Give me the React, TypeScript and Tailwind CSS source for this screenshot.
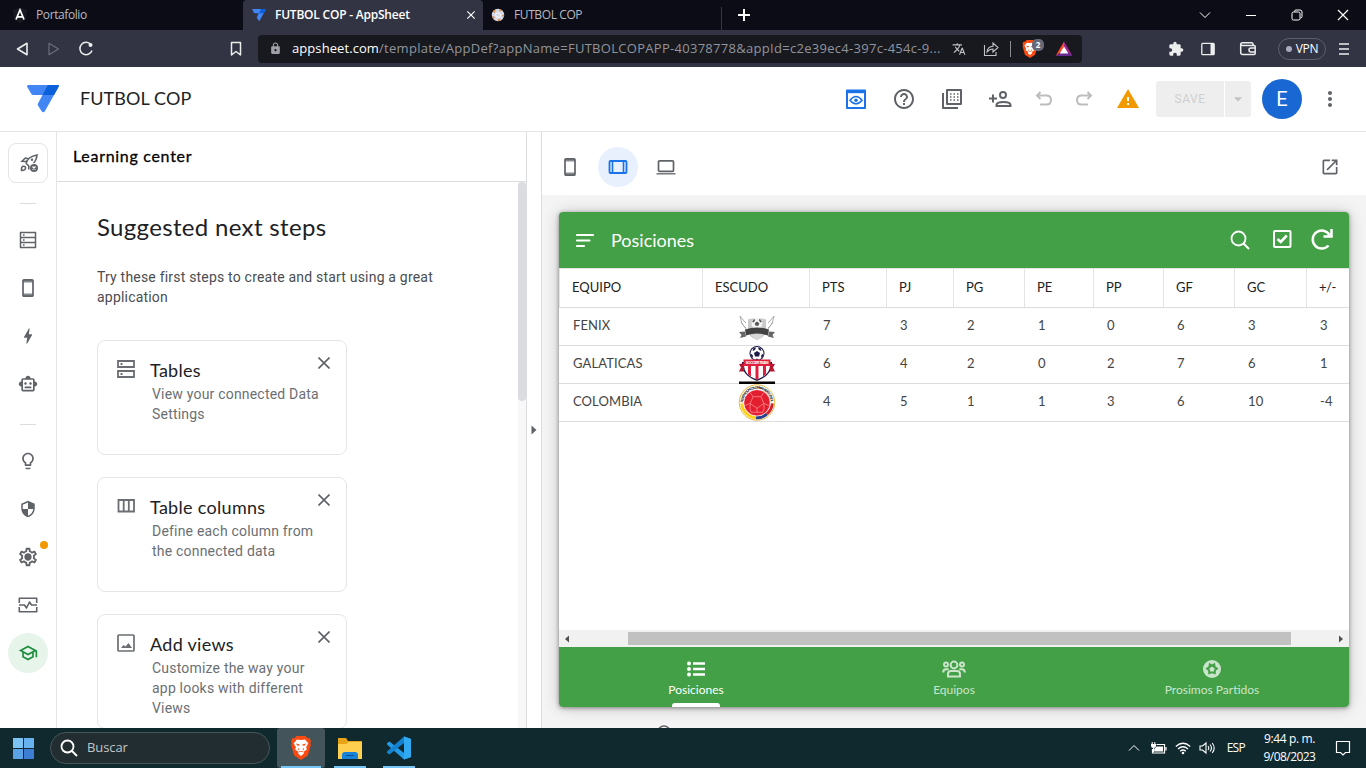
import React from "react";
import {
  MdHelpOutline, MdWarning, MdArrowDropDown, MdMoreVert, MdOutlineSmartToy, MdBolt,
  MdOutlineLightbulb, MdOutlineSettings, MdOutlineSchool, MdClose,
  MdOpenInNew, MdTranslate, MdExtension, MdLock, MdSecurity,
} from "react-icons/md";

type SvgProps = { className?: string; children: React.ReactNode; box?: string };
const Svg = ({ className = "", children, box = "0 0 24 24" }: SvgProps) => (
  <svg viewBox={box} className={"shrink-0 " + className} fill="none" stroke="currentColor">{children}</svg>
);

const AppSheetLogo = ({ className }: { className: string }) => (
  <Svg box="0 0 32 28" className={className}>
    <g stroke="none">
      <path d="M1.500 0H31Q32.500 0 31.500 2L18 26Q16.300 28.500 14.500 26L11 20.500Q10.400 19.500 11 18.500L15.500 10H6Q5 10 4.400 9L.3 2Q-.5 0 1.500 0Z" fill="#4285f4" />
      <path d="M21 0H31Q32.500 0 31.500 2L27 10H15.500Z" fill="#0a5fdb" />
    </g>
  </Svg>
);

const BraveLion = ({ className }: { className: string }) => (
  <Svg box="0 0 20 24" className={className}>
    <g stroke="none">
      <path d="M5.500 0h9l2 2.200 2-.2L20 5l-.7 2 .5 2-3 10.500L10 24l-6.800-4.500L.2 9l.5-2L0 5l1.500-3 2 .2Z" fill="#fb4a12" />
      <path d="M6 3.500l4 .6 4-.6 3.300 3.800-2.200 4 .8 2.200-3.300 2.200.3 1.800L10 20l-2.900-2.500.3-1.800-3.300-2.200.8-2.200-2.200-4Z" fill="#fff" />
      <path d="M5 7.500l3.700.9-.5 1.300-2-.1ZM15 7.500l-3.700.9.500 1.300 2-.1ZM7 11.500l1.500 2-1 1ZM13 11.500l-1.500 2 1 1ZM7.700 15.500L10 14.900l2.300.6-.4.800-1.900-.6-1.900.6Z" fill="#fb4a12" />
    </g>
  </Svg>
);

const Phone = ({ className }: { className: string }) => (
  <Svg box="0 0 14 20" className={className}>
    <rect x="2" y="1.800" width="10" height="16.400" rx="1" strokeWidth="1.700" />
    <path d="M2 3.300h10M2 16.700h10" strokeWidth="2.600" opacity=".75" />
  </Svg>
);

function Browser() {
  return (
    <div className="font-['Open_Sans','Noto_Sans',sans-serif]">
      <div className="flex h-[30px] bg-[#0b0c15] text-[12px]">
        <div className="flex w-[243px] items-center pl-3 text-[#b9bac0]">
          <Svg box="0 0 16 16" className="size-4">
            <path d="M8 .5L15 3l-1 9.500L8 16l-6-3.500L1 3Z" fill="#171a22" stroke="none" />
            <path d="M4 12.500L8 3l4 9.500M5.500 9.800h5" stroke="#fff" strokeWidth="1.700" />
          </Svg>
          <span className="ml-2 tracking-[-0.4px]">Portafolio</span>
        </div>
        <div className="flex w-[240px] items-center rounded-t-[4px] bg-[#323443] pl-[9px] pr-[5px] text-white">
          <AppSheetLogo className="h-[12px] w-[14px]" />
          <span className="ml-[9px] font-semibold tracking-[-0.22px]">FUTBOL COP - AppSheet</span>
          <MdClose className="ml-auto size-[14px]" />
        </div>
        <div className="flex w-[239px] items-center pl-2 text-[#b9bac0]">
          <Svg box="0 0 14 14" className="size-[14px]">
            <circle cx="7" cy="7" r="6.200" fill="#d5d9e6" stroke="none" />
            <path d="M7 4.500L9.500 6.300 8.500 9.200h-3L4.500 6.300Z" stroke="#fff" strokeWidth=".8" />
            <circle cx="7" cy="7" r="5.200" stroke="#d98c4a" strokeWidth="1.800" strokeDasharray="2.500 4.030" strokeDashoffset="1" />
          </Svg>
          <span className="ml-[9px] tracking-[-0.4px]">FUTBOL COP</span>
          <i className="ml-auto h-[23px] w-px self-end bg-[#343643]" />
        </div>
        <div className="flex flex-1 items-center pl-[15px] text-white">
          <Svg box="0 0 14 14" className="size-[14px]"><path d="M7 1v12M1 7h12" strokeWidth="2" /></Svg>
          <div className="ml-auto flex items-center pr-[17px]">
            <Svg box="0 0 12 12" className="mr-[34px] size-3"><path d="M1 3.500l5 5 5-5" /></Svg>
            <Svg box="0 0 12 12" className="mr-[34px] size-3"><path d="M1 6.500h10" /></Svg>
            <Svg box="0 0 12 12" className="mr-[34px] size-3"><path d="M3.500 2.500Q3.500 1 5 1h4q2 0 2 2v4.500Q11 9 9.500 9M2.500 3h5Q9 3 9 4.500v5Q9 11 7.500 11h-5Q1 11 1 9.500v-5Q1 3 2.500 3Z" /></Svg>
            <Svg box="0 0 12 12" className="size-3"><path d="M1 1l10 10M11 1L1 11" strokeWidth="1.200" /></Svg>
          </div>
        </div>
      </div>
      <div className="flex h-[37px] items-center bg-[#323443] pl-4 text-[#eceded]">
        <Svg box="0 0 14 14" className="size-[14px]"><path d="M11 1.300v11.400L1.500 7Z" strokeWidth="1.600" strokeLinejoin="round" /></Svg>
        <Svg box="0 0 14 14" className="ml-[17px] size-[14px] text-[#6c6e7c]"><path d="M2 1.300v11.400L11.500 7Z" strokeWidth="1.200" strokeLinejoin="round" /></Svg>
        <Svg box="0 0 16 16" className="ml-[17px] size-4"><path d="M13 3.700A6.200 6.200 0 1 0 14 9.500" strokeWidth="1.500" /><circle cx="12.500" cy="4" r="2" fill="currentColor" stroke="none" /></Svg>
        <Svg box="0 0 12 16" className="ml-[136px] h-4 w-3"><path d="M1.500 1.500h9v12.500L6 10.500 1.500 14Z" strokeWidth="1.500" strokeLinejoin="round" /></Svg>
        <div className="ml-4 flex h-7 w-[824px] items-center rounded-[4px] bg-[#17191f] pl-[11px] pr-2 text-[13px] text-[#92949d]">
          <MdLock className="size-[13px] text-[#a0a1a8]" />
          <span className="ml-[10px] w-[651px] whitespace-nowrap tracking-[0.29px]"><span className="tracking-[0.08px] text-white">appsheet.com</span>/template/AppDef?appName=FUTBOLCOPAPP-40378778&amp;appId=c2e39ec4-397c-454c-9...</span>
          <MdTranslate className="ml-[9px] size-[14px] text-[#c2c3c8]" />
          <Svg box="0 0 16 16" className="ml-[17px] size-4 text-[#c2c3c8]"><path d="M1.500 4v10.500h11.500V11M4 11Q4.500 5.500 10 5.200V2L15 6.500 10 11V8Q6.500 8 4 11Z" strokeWidth="1.100" /></Svg>
          <i className="ml-[11px] h-4 w-px bg-[#8a8b93]" />
          <div className="relative ml-[11px] flex w-[22px]">
            <BraveLion className="h-[18px] w-[16px]" />
            <span className="absolute left-[10px] top-[-1px] flex h-3 w-3 items-center justify-center rounded-[5px] bg-[#666a78] text-[8px] font-bold text-white">2</span>
          </div>
          <Svg box="0 0 18 16" className="ml-[11px] h-4 w-[18px]"><g stroke="none"><path d="M9 .5L.5 15 9 9Z" fill="#ff4724" /><path d="M9 .5L17.500 15 9 9Z" fill="#a3278f" /><path d="M.5 15h17L9 9Z" fill="#672b90" /><path d="M9 5.500l4.300 7H4.700Z" fill="#fff" /></g></Svg>
        </div>
        <MdExtension className="ml-[86px] size-4" />
        <Svg box="0 0 14 14" className="ml-[17px] size-[14px]"><rect x=".8" y="1.300" width="12.400" height="11.400" rx="1" strokeWidth="1.300" /><path d="M9.500 1.500h3.500v11H9.500Z" fill="currentColor" stroke="none" /></Svg>
        <Svg box="0 0 18 16" className="ml-[24px] h-4 w-[18px]"><path d="M14 4.500V3Q14 1.700 12.500 1.700H3.500Q1.700 1.700 1.700 3.500v8q0 2 2 2h11.500q1 0 1-1v-7q0-1-1-1H3.500Q1.700 4.500 1.700 3M16 7h-4q-2 0-2 2t2 2h4" strokeWidth="1.500" /></Svg>
        <div className="ml-[21px] flex h-[22px] w-[48px] items-center justify-center rounded-full border border-[#5b5e6f] text-[12px] tracking-[-0.3px] text-white"><i className="mr-1 size-[6px] rounded-full bg-[#a8abbe]" />VPN</div>
        <Svg box="0 0 10 14" className="ml-[13px] h-[14px] w-[10px]"><path d="M0 2h10M0 7h10M0 12h10" strokeWidth="1.500" /></Svg>
      </div>
    </div>
  );
}

function Header() {
  return (
    <header className="flex h-[65px] items-center border-b border-[#e4e5e7] bg-white pb-px pl-[27px] text-[#5f6368]">
      <AppSheetLogo className="h-[28px] w-[32px]" />
      <h1 className="ml-[21px] font-['Lato',sans-serif] text-[18px] tracking-[0.1px] text-[#202124]">FUTBOL COP</h1>
      <div className="ml-auto flex items-center">
        <Svg className="size-6 text-[#1a73e8]"><path d="M3 3.500h18v17.500H3Z" strokeWidth="2" strokeLinejoin="round" /><path d="M2.500 3h19v3.200h-19Z" fill="currentColor" stroke="none" /><path d="M6 13.200q6-7.200 12 0-6 7.200-12 0Z" strokeWidth="1.500" /><circle cx="12" cy="13.200" r="1.800" fill="currentColor" stroke="none" /></Svg>
        <MdHelpOutline className="ml-6 size-6" />
        <Svg className="ml-6 size-6"><path d="M7 3h14v14H7ZM3 6v15h15" strokeWidth="2" strokeLinejoin="round" /><path d="M10 7h9M10 10h9M10 13h9" strokeWidth="1.500" strokeDasharray="1.500 2" /></Svg>
        <Svg className="ml-6 size-6"><circle cx="15" cy="8" r="3" strokeWidth="2" /><path d="M8.500 19v-1q0-3 7-3t7 3v1ZM5 7.500v8M1 11.500h8" strokeWidth="2" /></Svg>
        <Svg className="ml-5 size-6 text-[#bdbdbd]"><path d="M8.500 5L5 8.500 8.500 12M5 8.500h9.500Q19 8.500 19 13t-4.500 4.500H8" strokeWidth="2" /></Svg>
        <Svg className="ml-4 size-6 text-[#bdbdbd]"><path d="M15.500 5L19 8.500 15.500 12M19 8.500H9.500Q5 8.500 5 13t4.500 4.500H16" strokeWidth="2" /></Svg>
        <MdWarning className="ml-5 size-6 text-[#f29900]" />
        <div className="ml-4 flex h-9 w-[95px] rounded-[3px] bg-[#eee] font-['Roboto',sans-serif] text-[12px] text-[#cfcfcf]">
          <span className="flex w-[69px] items-center justify-center border-r border-white tracking-[0.5px]">SAVE</span>
          <MdArrowDropDown className="m-auto size-5 text-[#c4c4c4]" />
        </div>
        <div className="ml-[11px] flex size-10 items-center justify-center rounded-full bg-[#1967d2] font-['Roboto',sans-serif] text-[20px] text-white">E</div>
        <MdMoreVert className="ml-4 mr-6 size-6" />
      </div>
    </header>
  );
}

const Item = ({ children }: { children: React.ReactNode }) => (
  <div className="flex h-12 items-center justify-center">{children}</div>
);

function Sidebar() {
  return (
    <nav className="flex w-[57px] flex-col border-r border-[#e4e5e7] pt-[11px] text-[#5f6368]">
      <div className="ml-2 flex size-10 items-center justify-center rounded-lg border border-[#e4e5e7]">
        <Svg box="0 0 20 20" className="ml-px size-5">
          <path d="M7 10Q9 3.500 18 2q-.6 5.500-3.500 8M8 8.500L3 8.300 6.300 5l3.200.7M6.800 10l3 3v3.500" strokeWidth="1.600" />
          <path d="M2.500 17.500q-.3-4.500 2.200-4.300 3 .5 1.300 3.300-1 1-3.500 1Z" strokeWidth="1.600" />
          <circle cx="13" cy="6.800" r="1.200" fill="currentColor" stroke="none" />
          <circle cx="15" cy="15" r="4" fill="currentColor" stroke="none" /><path d="M13.500 13.500l3 3M16.500 13.500l-3 3" stroke="#fff" strokeWidth="1.200" />
        </Svg>
      </div>
      <i className="ml-5 mt-5 h-px w-4 bg-[#dadce0]" />
      <div className="mt-3">
        <Item><Svg box="0 0 20 20" className="size-5"><path d="M2.500 2.500h15v15h-15ZM2.500 7.500h15M2.500 12.500h15" strokeWidth="1.500" /><path d="M5 5h1.600M5 10h1.600M5 15h1.600" strokeWidth="1.500" /></Svg></Item>
        <Item><Phone className="h-5 w-[14px]" /></Item>
        <Item><MdBolt className="size-5" /></Item>
        <Item><MdOutlineSmartToy className="size-5" /></Item>
      </div>
      <i className="ml-5 mt-4 h-px w-4 bg-[#dadce0]" />
      <div className="mt-3">
        <Item><MdOutlineLightbulb className="size-5" /></Item>
        <Item><MdSecurity className="size-[18px]" /></Item>
        <div className="relative"><Item><MdOutlineSettings className="size-[22px]" /></Item><i className="absolute left-[25px] top-[21px] size-[6px] rounded-full bg-[#5f6368]" /><i className="absolute left-10 top-2 size-2 rounded-full bg-[#f29900]" /></div>
        <Item><Svg box="0 0 20 16" className="h-4 w-5"><path d="M1.300 6V1.300h17.400V6M1.300 10v4.700h17.400V10M1 8h5.500l2 3 3-6L13.500 8H19" strokeWidth="1.600" strokeLinejoin="round" /></Svg></Item>
        <Item><div className="flex size-10 items-center justify-center rounded-full bg-[#e6f4ea] text-[#1e8e3e]"><MdOutlineSchool className="size-5" /></div></Item>
      </div>
    </nav>
  );
}

const cards = [
  { title: "Tables", lines: ["View your connected Data", "Settings"], icon: <Svg box="0 0 20 20" className="size-5"><path d="M2 2h16v6H2ZM2 12h16v6H2ZM4.500 5h2M4.500 15h2" strokeWidth="1.800" /></Svg> },
  { title: "Table columns", lines: ["Define each column from", "the connected data"], icon: <Svg box="0 0 20 20" className="size-5"><path d="M2.500 4h15.500v11.500h-15.500ZM7.700 4v11.500M12.800 4v11.500" strokeWidth="1.800" /></Svg> },
  { title: "Add views", lines: ["Customize the way your", "app looks with different", "Views"], icon: <Svg box="0 0 20 20" className="size-5"><rect x="2" y="2" width="16" height="16" rx="1" strokeWidth="1.700" /><path d="M5 15l2.500-3 2 1.500 3-3.500 3.500 5Z" fill="currentColor" stroke="none" /></Svg> },
];

function Learning() {
  return (
    <section className="w-[470px] overflow-hidden border-r border-[#dadce0]">
      <h2 className="flex h-[50px] items-center border-b border-[#dadce0] pb-[2px] pl-4 font-['Lato',sans-serif] text-[16px] font-normal tracking-[0.7px] text-black [-webkit-text-stroke:0.3px_#000]">Learning center</h2>
      <div className="flex h-[546px]">
        <div className="w-[461px] overflow-hidden pl-10">
          <h3 className="mt-[29px] font-['Lato',sans-serif] text-[24px] leading-8 tracking-[0.33px] text-[#202124]">Suggested next steps</h3>
          <p className="mt-[24px] font-['Roboto',sans-serif] text-[14px] leading-5 tracking-[0.2px] text-[#4a4d51]">Try these first steps to create and start using a great<br />application</p>
          <div className="mt-[33px] flex flex-col gap-[22px]">
            {cards.map((c) => (
              <article key={c.title} className="flex h-[115px] w-[250px] shrink-0 rounded-lg border border-[#e4e5e7] text-[#6b6f73]">
                <div className="ml-[18px] mt-[18px]">{c.icon}</div>
                <div className="ml-[14px] mt-[17px] w-[166px]">
                  <h4 className="mb-[2px] font-['Lato',sans-serif] text-[18px] leading-6 tracking-[0.3px] text-[#202124]">{c.title}</h4>
                  <p className="ml-[2px] whitespace-nowrap font-['Roboto',sans-serif] text-[14px] leading-5 tracking-[0.2px]">{c.lines.map((l) => <React.Fragment key={l}>{l}<br /></React.Fragment>)}</p>
                </div>
                <Svg box="0 0 12 12" className="ml-[2px] mt-4 size-3 text-[#5f6368]"><path d="M.5.5l11 11M11.500.5l-11 11" strokeWidth="1.600" /></Svg>
              </article>
            ))}
          </div>
        </div>
        <div className="w-2 bg-[#f8f8f8]"><div className="h-[219px] rounded-full bg-[#dadce0]" /></div>
      </div>
    </section>
  );
}

const FenixCrest = () => (
  <Svg box="0 0 36 38" className="h-[38px] w-9">
    <path d="M7 20L3 16 1 8l4 5 2 2M29 20l4-4 2-8-4 5-2 2M2 14l5 7M34 14l-5 7" stroke="#a5a5a5" strokeWidth=".9" />
    <g stroke="none">
      <path d="M9 11.500Q14 9.500 18 11.500q4-2 9 0V22q0 7-9 10Q9 29 9 22Z" fill="#c9c9c9" />
      <circle cx="18" cy="15.500" r="5.500" fill="#f2f2f2" /><path d="M18 13.500l2.300 1.700-.9 2.600h-2.800l-.9-2.600ZM13 14l2-3 1.200.8-1.200 2.400ZM23 14l-2-3-1.200.8 1.200 2.400Z" fill="#555" />
      <path d="M6 21.500q12-4 24 0l-1 6q-11-4-22 0Z" fill="#424242" />
      <path d="M0 24l6-.5 1 5-2 .5-4 1 1.500-3ZM36 24l-6-.5-1 5 2 .5 4 1-1.500-3Z" fill="#666" />
      <path d="M12 26.800q6-1.500 12 0-3 4.500-6 5.500-3-1-6-5.500Z" fill="#d8d8d8" />
    </g>
  </Svg>
);

const SoccerCrest = () => (
  <Svg box="0 0 36 38" className="h-[38px] w-9">
    <g stroke="none">
      <path d="M3 16h30q1 13-15 19Q2 29 3 16Z" fill="#1d1b49" /><path d="M5 19h26q0 10-13 14.500Q5 29 5 19Z" fill="#fff" />
      <path d="M9 20h3v10.500l-3-2.200ZM16.500 20h3v13l-1.500.5-1.500-.5ZM24 20h3v8.300l-3 2.200Z" fill="#df213d" />
      <circle cx="18" cy="7.500" r="7.500" fill="#1d1b49" /><circle cx="18" cy="7.500" r="6.500" fill="#fff" />
      <path d="M18 5l3 2-1 3.500h-4L15 7ZM14.500 2l2.500-.5-1 2.500-2.500 1ZM21.500 2L19 1.500l1 2.500 2.500 1ZM11.500 7.500l2.200 1.500.3 3-2-1.500ZM24.500 7.500L22.300 9l-.3 3 2-1.500ZM16 14l2-1.500 2 1.500Z" fill="#1d1b49" />
      <path d="M0 18l5-.5v8H0l2-4ZM36 18l-5-.5v8h5l-2-4Z" fill="#b8162f" /><path d="M4.500 13.500h27v6.500h-27Z" fill="#df213d" />
      <text x="18" y="18.300" fontSize="4" fontWeight="700" textAnchor="middle" textLength="23" fill="#fff" fontFamily="Liberation Sans">SOCCER TEAM</text>
      <path d="M0 35.500h36v2.500H0Z" fill="#000" />
    </g>
  </Svg>
);

const ColombiaCrest = () => (
  <Svg box="0 0 38 38" className="-mx-px h-[37px] w-[38px]">
    <circle cx="19" cy="19" r="18.200" fill="#fff" stroke="#e2b73c" />
    <path d="M3.300 20A15.700 15.700 0 0 0 18 34.700" stroke="#fcd116" strokeWidth="3" /><path d="M18 34.700A15.700 15.700 0 0 0 29 31" stroke="#27408f" strokeWidth="3" /><path d="M29 31A15.700 15.700 0 0 0 34.700 20" stroke="#d3222a" strokeWidth="3" />
    <path id="crestArc" stroke="none" d="M4.800 19A14.200 14.200 0 0 1 33.200 19" />
    <text fontSize="3.600" fontWeight="700" fill="#222" stroke="none" fontFamily="Liberation Sans"><textPath href="#crestArc" textLength="44">FEDERACION COLOMBIANA DE FUTBOL</textPath></text>
    <circle cx="19" cy="19.300" r="13.500" fill="#e31f2f" stroke="#fff" strokeWidth=".6" />
    <path d="M15 13h8l3 7-7 5-7-5ZM15 13l-3-4M23 13l3-4M26 20l5 2M12 20l-5 2M19 25v4M12 20q-1 6 1 9M26 20q1 6-1 9M13 29l6 0 6 0" stroke="#ff8d92" strokeWidth=".8" />
  </Svg>
);

const cols = ["w-[143px]", "w-[107px]", "w-[77px]", "w-[67px]", "w-[71px]", "w-[69px]", "w-[70px]", "w-[71px]", "w-[72px]", "w-[43px]"];
const heads = ["EQUIPO", "ESCUDO", "PTS", "PJ", "PG", "PE", "PP", "GF", "GC", "+/-"];
const rows = [
  ["FENIX", <FenixCrest />, "7", "3", "2", "1", "0", "6", "3", "3"],
  ["GALATICAS", <SoccerCrest />, "6", "4", "2", "0", "2", "7", "6", "1"],
  ["COLOMBIA", <ColombiaCrest />, "4", "5", "1", "1", "3", "6", "10", "-4"],
];

function Preview() {
  return (
    <section className="flex flex-1 flex-col border-l border-[#dadce0] bg-[#f4f4f4]">
      <div className="flex h-[63px] shrink-0 items-center bg-white pl-[21px] pt-[7px] text-[#5f6368]">
        <Phone className="h-5 w-[14px]" />
        <div className="ml-[21px] flex size-10 items-center justify-center rounded-full bg-[#e8f0fe] text-[#1a73e8]"><Svg box="0 0 20 16" className="h-4 w-5"><rect x="1.500" y="2" width="17" height="12" rx="1" strokeWidth="1.800" /><path d="M4.500 2v12M15.500 2v12" strokeWidth="1.600" /></Svg></div>
        <Svg box="0 0 20 16" className="ml-[18px] h-4 w-5"><rect x="2.500" y="1.800" width="15" height="10.500" rx="1" strokeWidth="1.700" /><path d="M.5 14.800h19" strokeWidth="1.300" /></Svg>
        <MdOpenInNew className="ml-auto mr-[26px] size-5" />
      </div>
      <div className="ml-[17px] mt-[17px] flex h-[495px] w-[790px] shrink-0 flex-col overflow-hidden rounded-[4px] bg-white font-['Lato',sans-serif] shadow-[0_1px_16px_rgba(0,0,0,0.2),0_1px_4px_rgba(0,0,0,0.4)]">
        <div className="flex h-14 shrink-0 items-center bg-[#43a047] pl-4 pr-4 text-white">
          <Svg box="0 0 20 16" className="mt-px h-4 w-5"><path d="M2 2h16M2 7.500h12.500M2 13h7" strokeWidth="2.200" strokeLinecap="round" /></Svg>
          <span className="ml-4 text-[18px]">Posiciones</span>
          <div className="ml-auto flex items-center">
            <Svg box="0 0 20 20" className="size-5"><circle cx="8.500" cy="8.500" r="7" strokeWidth="1.800" /><path d="M13.500 13.500l5.500 5.500" strokeWidth="2" /></Svg>
            <Svg box="0 0 20 20" className="-mt-[3px] ml-[22px] size-5"><rect x="2" y="2" width="16.500" height="16" rx="1" strokeWidth="2" /><path d="M5.500 10l3.300 3 6-6.500" strokeWidth="2.600" /></Svg>
            <Svg box="0 0 22 22" className="-mt-[3px] ml-[19px] size-[22px]"><path d="M18.500 7A9 9 0 1 0 17.500 17.500M12.500 8.500h8V1" strokeWidth="2.500" /></Svg>
          </div>
        </div>
        <div className="flex h-10 shrink-0 border-b border-[#dadce0] text-[13px] text-[#212121]">
          {heads.map((h, i) => <div key={h} className={"flex items-center border-l border-t border-[#e4e4e4] pl-3 " + (i === 9 ? "tracking-[-0.5px] " : "") + cols[i]}>{h}</div>)}
        </div>
        {rows.map((r, ri) => (
          <div key={ri} className="flex h-[38px] shrink-0 border-b border-[#dadce0] text-[13px] text-[#444]">
            {r.map((c, i) => <div key={i} className={"flex items-center " + (i === 1 ? "pl-[37px] " : "pb-px pl-[14px] tracking-[0.1px] ") + cols[i]}>{c}</div>)}
          </div>
        ))}
        <div className="mt-auto flex h-[17px] shrink-0 items-center bg-[#f1f1f1] pl-1 pr-1 text-[#505050]">
          <Svg box="0 0 8 8" className="size-2"><path d="M6 .5v7L2 4Z" fill="currentColor" stroke="none" /></Svg>
          <div className="ml-[57px] h-[13px] w-[663px] bg-[#c1c1c1]" />
          <Svg box="0 0 8 8" className="ml-auto size-2"><path d="M2 .5v7L6 4Z" fill="currentColor" stroke="none" /></Svg>
        </div>
        <div className="flex h-[60px] shrink-0 bg-[#43a047] px-2 text-[12px] text-[#cbe5cc]">
          <div className="flex flex-1 flex-col items-center pt-3 text-white">
            <Svg box="0 0 20 20" className="size-5"><path d="M7 4.500h12M7 10h12M7 15.500h12" strokeWidth="2.700" /><path d="M3 4.500h.01M3 10h.01M3 15.500h.01" strokeWidth="4" strokeLinecap="round" /></Svg>
            <span className="mt-[2px] leading-[18px]">Posiciones</span>
            <i className="mt-auto h-1 w-12 rounded-t-[3px] bg-white" />
          </div>
          <div className="flex flex-1 flex-col items-center pt-3">
            <Svg box="0 0 24 20" className="h-5 w-6"><circle cx="12" cy="6" r="3.400" strokeWidth="2" /><circle cx="4" cy="5.500" r="2" strokeWidth="1.900" /><circle cx="20" cy="5.500" r="2" strokeWidth="1.900" /><path d="M6 17.500v-2.500q0-3 3-3h6q3 0 3 3v2.500ZM1.200 13.500q0-3.200 3-3.200h2.500M22.800 13.500q0-3.200-3-3.200h-2.500" strokeWidth="2" /></Svg>
            <span className="mt-[2px] leading-[18px]">Equipos</span>
          </div>
          <div className="flex flex-1 flex-col items-center pt-3">
            <Svg box="0 0 20 20" className="size-5"><circle cx="10" cy="10" r="9" fill="currentColor" stroke="none" /><path d="M10 5.500L7 3.800 6.500 7.600 3.500 9.500 6.200 11.800 6.300 15.500 10 14.300 13.700 15.500 13.800 11.800 16.500 9.500 13.500 7.600 13 3.800Z" fill="#43a047" stroke="none" /><path d="M10 7.500l2.700 2-1 3H8.300l-1-3Z" fill="currentColor" stroke="none" /></Svg>
            <span className="mt-[2px] leading-[18px]">Prosimos Partidos</span>
          </div>
        </div>
      </div>
      <Svg box="0 0 14 14" className="ml-[115px] mt-[18px] size-[14px] text-[#5f6368]"><circle cx="7" cy="7" r="6" strokeWidth="1.600" /></Svg>
    </section>
  );
}

function Taskbar() {
  return (
    <footer className="flex h-10 items-center bg-[#10292f] pl-[13px] font-['Open_Sans','Noto_Sans',sans-serif] text-white">
      <div className="grid size-[21px] grid-cols-2 gap-px">
        <i className="bg-[#7cc4f4]" /><i className="bg-[#67b1ee]" /><i className="bg-[#5aa3e6]" /><i className="bg-[#3d7dd3]" />
      </div>
      <div className="ml-4 flex h-8 w-[220px] items-center rounded-full border border-[#4a5558] bg-[#212d31] pl-[9px] text-[13px] text-[#c1c6c8]">
        <Svg box="0 0 18 18" className="size-[18px] text-white"><circle cx="7.500" cy="7.500" r="6" strokeWidth="1.800" /><path d="M12 12l5 5" strokeWidth="2" /></Svg>
        <span className="ml-[9px] tracking-[-0.1px]">Buscar</span>
      </div>
      <div className="ml-[7px] flex h-10 w-[48px] flex-col items-center rounded-[3px] bg-[#43545a] pt-2">
        <BraveLion className="h-6 w-5" /><i className="mt-auto h-[2px] w-10 bg-[#76c5f7]" />
      </div>
      <div className="ml-[9px] flex h-10 w-8 flex-col items-center pt-[10px]">
        <Svg box="0 0 24 21" className="h-[21px] w-6"><g stroke="none"><path d="M0 0h8l2 3h14v5H0Z" fill="#e8a317" /><path d="M0 6h8l3-2h13v17H0Z" fill="#ffd04f" /><path d="M4 21v-4q0-3 3-3h10q3 0 3 3v4Z" fill="#1683d8" /><path d="M8 17h8v1H8Z" fill="#0b4f8f" /></g></Svg>
        <i className="mt-auto h-[2px] w-8 bg-[#76c5f7]" />
      </div>
      <div className="ml-[17px] flex h-10 w-8 flex-col items-center pt-2">
        <Svg box="0 0 24 24" className="size-6"><g stroke="none"><path d="M17 .5L24 3v18l-7 2.500L0 8.500V7l2.500-1.500L17 17Z" fill="#219be8" /><path d="M17 .5L0 15.500V17l2.500 1.500L17 7Z" fill="#1482ce" /><path d="M17 .5L24 3v18l-7 2.500Z" fill="#30abf2" /></g></Svg>
        <i className="mt-auto h-[2px] w-8 bg-[#76c5f7]" />
      </div>
      <div className="ml-auto flex items-center pr-[15px]">
        <Svg box="0 0 12 12" className="mr-[-1px] size-3"><path d="M1 8.500l5-5 5 5" /></Svg>
        <Svg box="0 0 16 14" className="ml-3 h-[14px] w-4"><path d="M5.500 3.500h8v8.500h-12V8M15 6v3.500" strokeWidth="1.200" /><path d="M5.500 5.500h6.500v5H3.200V8Z" fill="currentColor" stroke="none" /><path d="M0 3h5v2q0 2-2.500 2T0 5ZM.7 1h1v2h-1ZM3.300 1h1v2h-1ZM2 7h1v4H2Z" fill="currentColor" stroke="none" /></Svg>
        <Svg box="0 0 16 14" className="ml-2 h-[14px] w-4"><path d="M.8 5.500Q8-1 15.200 5.500M3 8q5-4.500 10 0M5.200 10.300q2.800-2.600 5.600 0" strokeWidth="1.200" /><circle cx="8" cy="12" r="1.300" fill="currentColor" stroke="none" /></Svg>
        <Svg box="0 0 16 14" className="ml-2 h-[14px] w-4"><path d="M1 5h2.500L7 2v10L3.500 9H1ZM9 5q1.500 2 0 4M11 3.500q3 3.500 0 7M13.200 2q4 5 0 10" strokeWidth="1.100" /></Svg>
        <span className="ml-3 text-[12px] tracking-[-0.7px]">ESP</span>
        <div className="ml-[18px] w-[53px] whitespace-nowrap text-center text-[12px] leading-[18px]"><span className="tracking-[-0.38px]">9:44 p. m.</span><br /><span className="tracking-[-0.55px]">9/08/2023</span></div>
        <Svg box="0 0 16 16" className="ml-[19px] size-4"><path d="M1.500 1.500h13v11H10.500L8 15l-2.500-2.500H1.500Z" strokeWidth="1.200" /></Svg>
      </div>
    </footer>
  );
}

export default function App() {
  return (
    <div className="flex h-[768px] w-[1366px] flex-col overflow-hidden bg-white">
      <Browser />
      <Header />
      <main className="flex h-[596px] overflow-hidden">
        <Sidebar />
        <Learning />
        <div className="flex w-[14px] items-center justify-center text-[#5f6368]"><Svg box="0 0 6 10" className="h-[10px] w-[6px]"><path d="M.5.5v9L5.500 5Z" fill="currentColor" stroke="none" /></Svg></div>
        <Preview />
      </main>
      <Taskbar />
    </div>
  );
}
